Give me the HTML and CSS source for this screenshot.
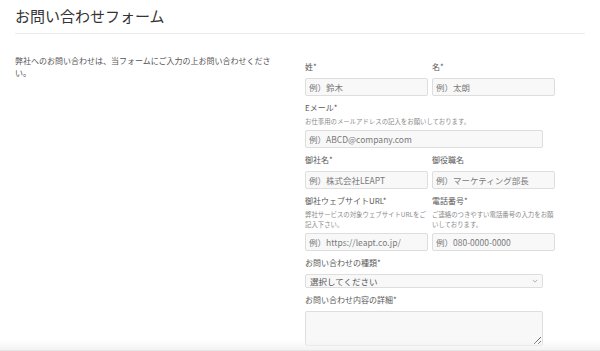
FILE: index.html
```html
<!DOCTYPE html>
<html lang="ja">
<head>
<meta charset="utf-8">
<title>お問い合わせフォーム</title>
<link rel="stylesheet" href="styles.css">
</head>
<body>
<div class="page">
  <h1 class="title">お問い合わせフォーム</h1>
  <hr class="rule">
  <div class="layout">
    <p class="intro">弊社へのお問い合わせは、当フォームにご入力の上お問い合わせください。</p>
    <form class="form">
      <div class="pair">
        <div class="field">
          <label class="label">姓*</label>
          <input class="input" type="text" placeholder="例）鈴木">
        </div>
        <div class="field">
          <label class="label">名*</label>
          <input class="input" type="text" placeholder="例）太朗">
        </div>
      </div>
      <div class="field narrow">
        <label class="label">Eメール*</label>
        <p class="help">お仕事用のメールアドレスの記入をお願いしております。</p>
        <input class="input" type="text" placeholder="例）ABCD@company.com">
      </div>
      <div class="pair">
        <div class="field">
          <label class="label">御社名*</label>
          <input class="input" type="text" placeholder="例）株式会社LEAPT">
        </div>
        <div class="field">
          <label class="label">御役職名</label>
          <input class="input" type="text" placeholder="例）マーケティング部長">
        </div>
      </div>
      <div class="pair">
        <div class="field">
          <label class="label">御社ウェブサイトURL*</label>
          <p class="help">弊社サービスの対象ウェブサイトURLをご記入下さい。</p>
          <input class="input" type="text" placeholder="例）https://leapt.co.jp/">
        </div>
        <div class="field">
          <label class="label">電話番号*</label>
          <p class="help">ご連絡のつきやすい電話番号の入力をお願いしております。</p>
          <input class="input" type="text" placeholder="例）080-0000-0000">
        </div>
      </div>
      <div class="field narrow">
        <label class="label">お問い合わせの種類*</label>
        <div class="select-wrap">
          <select class="select">
            <option>選択してください</option>
          </select>
          <svg class="chev" viewBox="0 0 8 5" width="6" height="4"><path d="M1 1l3 3 3-3" fill="none" stroke="#999" stroke-width="1"/></svg>
        </div>
      </div>
      <div class="field narrow">
        <label class="label">お問い合わせ内容の詳細*</label>
        <textarea class="textarea"></textarea>
      </div>
    </form>
  </div>
</div>
<div class="bottom-fade"></div>
</body>
</html>
```

FILE: styles.css
```css
* { box-sizing: border-box; }
html, body { margin: 0; padding: 0; background: #fff; }
body {
  font-family: "Noto Sans CJK JP", "Noto Sans", sans-serif;
  color: #555;
  overflow: hidden;
}
.page { padding: 0 15px; }
.title {
  margin: 0;
  padding-top: 6px;
  font-size: 15px;
  line-height: 20px;
  font-weight: 400;
  color: #333;
}
.rule {
  margin: 7px 0 0;
  border: 0;
  border-top: 1px solid #ececec;
}
.layout {
  display: grid;
  grid-template-columns: 275px 250px;
  column-gap: 15px;
  margin-top: 21px;
}
.intro {
  margin: 0;
  max-width: 266px;
  font-size: 8px;
  line-height: 12px;
  color: #555;
}
.form {
  padding-top: 6px;
  display: flex;
  flex-direction: column;
}
.pair {
  display: grid;
  grid-template-columns: 123px 123px;
  column-gap: 4px;
}
.field {
  display: flex;
  flex-direction: column;
  margin-bottom: 6px;
}
.narrow { width: 238px; }
.label {
  display: block;
  font-size: 8px;
  line-height: 12px;
  margin-bottom: 5px;
  color: #585858;
}
.help {
  margin: -2px 0 3px;
  font-size: 6.4px;
  line-height: 10px;
  color: #8a8a8a;
}
.input, .select, .textarea {
  display: block;
  font-family: inherit;
  width: 100%;
  margin: 0;
  border: 1px solid #dedede;
  border-radius: 2px;
  background: #f8f8f8;
  color: #555;
  outline: none;
}
.input {
  height: 18px;
  padding: 0 3px;
  font-size: 8.5px;
}
.input::placeholder { color: #7a7a7a; }
.select-wrap { position: relative; }
.select {
  -webkit-appearance: none;
  appearance: none;
  height: 14px;
  padding: 0 4px;
  font-size: 8.5px;
  line-height: 12px;
  color: #555;
}
.chev {
  position: absolute;
  right: 5px;
  top: 5px;
}
.textarea {
  height: 35px;
  resize: vertical;
  padding: 3px;
  font-size: 8.5px;
}
.bottom-fade {
  position: fixed;
  left: 0;
  right: 0;
  bottom: 0;
  height: 11px;
  background: linear-gradient(to bottom, rgba(244,244,244,0), #f3f3f3);
  border-bottom: 1px solid #e6e6e6;
}
```
